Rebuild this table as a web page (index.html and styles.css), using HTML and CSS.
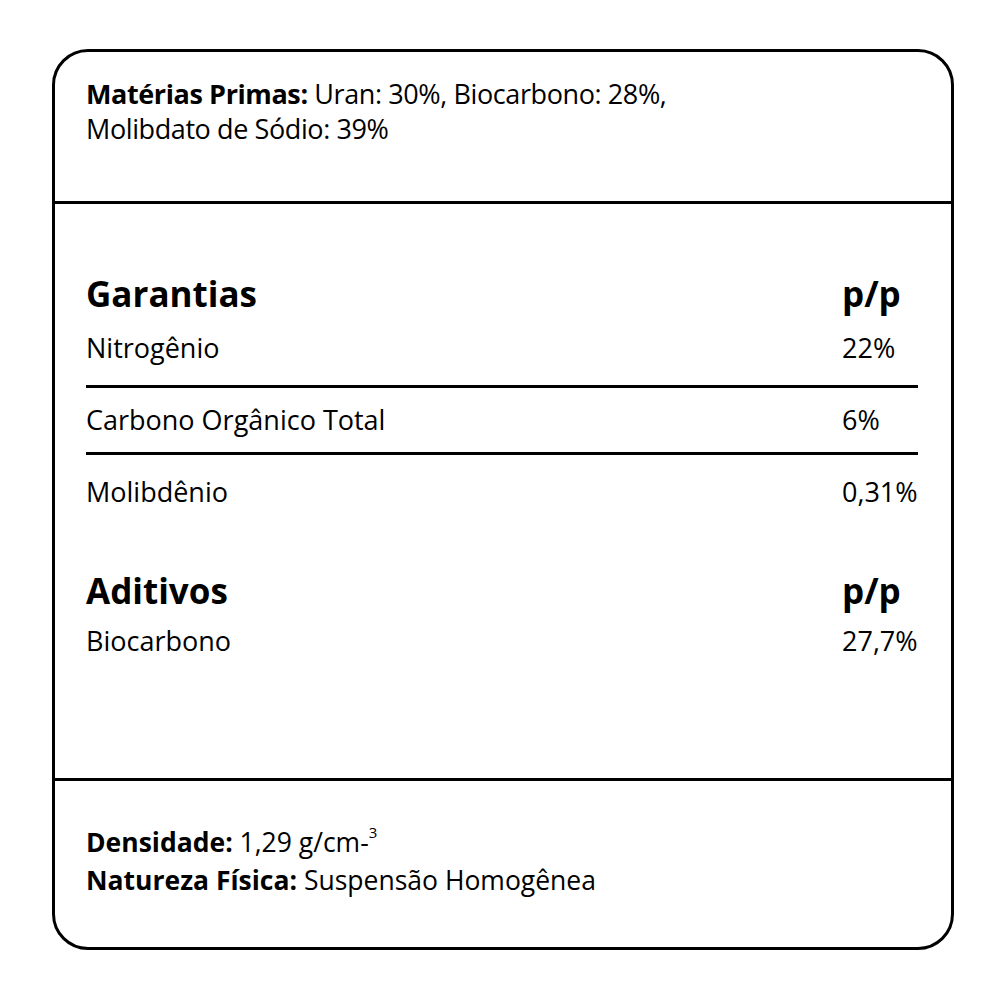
FILE: index.html
```html
<!DOCTYPE html>
<html lang="pt">
<head>
<meta charset="utf-8">
<title>Garantias</title>
<link rel="stylesheet" href="styles.css">
</head>
<body>
<div class="card">
  <section class="top">
    <p class="line"><b>Matérias Primas:</b> Uran: 30%, Biocarbono: 28%,<br>Molibdato de Sódio: 39%</p>
  </section>
  <section class="middle">
    <div class="head"><span>Garantias</span><span class="val">p/p</span></div>
    <div class="row first"><span>Nitrogênio</span><span class="val">22%</span></div>
    <div class="row ruled"><span>Carbono Orgânico Total</span><span class="val">6%</span></div>
    <div class="row ruled last"><span>Molibdênio</span><span class="val">0,31%</span></div>
    <div class="head second"><span>Aditivos</span><span class="val">p/p</span></div>
    <div class="row sub"><span>Biocarbono</span><span class="val">27,7%</span></div>
  </section>
  <section class="bottom">
    <p class="line"><b>Densidade:</b> 1,29 g/cm-<sup>3</sup><br><b>Natureza Física:</b> Suspensão Homogênea</p>
  </section>
</div>
</body>
</html>
```
FILE: styles.css
```css
html, body { margin: 0; padding: 0; background: #fff; }
body {
  font-family: "Open Sans", "Noto Sans", sans-serif;
  color: #000;
  padding: 49px 0 0 52px;
}
.card {
  box-sizing: border-box;
  width: 902px;
  height: 901px;
  border: 3px solid #000;
  border-radius: 36px;
  display: flex;
  flex-direction: column;
}
.line { margin: 0; }
.line b { font-weight: 700; }
.top {
  height: 152px;
  box-sizing: border-box;
  border-bottom: 3px solid #000;
  padding: 24px 0 0 31px;
}
.top .line { font-size: 27px; line-height: 35px; letter-spacing: -0.4px; }
.middle {
  height: 577px;
  box-sizing: border-box;
  border-bottom: 3px solid #000;
  padding: 68px 33px 0 31px;
}
.head, .row { display: flex; justify-content: space-between; }
.val { width: 76px; text-align: left; white-space: nowrap; }
.head { font-size: 35px; font-weight: 700; line-height: 44px; }
.row { font-size: 27px; line-height: 34px; }
.row.first { padding: 15px 0 20px; }
.row.ruled { border-top: 3px solid #000; padding: 15px 0 15px; }
.row.ruled.last { padding-top: 20px; }
.head.second { margin-top: 45px; }
.row.sub { padding-top: 11px; }
.bottom {
  flex: 1;
  padding: 42px 0 0 31px;
}
.bottom .line { font-size: 26.5px; line-height: 38px; }
sup { font-size: 15px; line-height: 0; vertical-align: 14px; }
```
